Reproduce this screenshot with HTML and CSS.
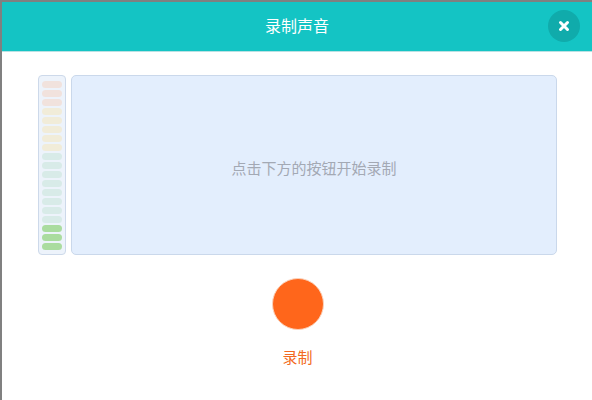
FILE: index.html
```html
<!DOCTYPE html>
<html lang="zh-CN">
<head>
<meta charset="UTF-8">
<title>录制声音</title>
<link rel="stylesheet" href="styles.css">
</head>
<body>
<div class="dialog">
    <div class="dialog-header">
        <span class="dialog-title">录制声音</span>
        <button class="close-btn" aria-label="关闭">
            <svg width="12" height="12" viewBox="0 0 12 12">
                <path d="M2.5 2.5 L9.5 9.5 M9.5 2.5 L2.5 9.5" stroke="#fff" stroke-width="3" stroke-linecap="round"/>
            </svg>
        </button>
    </div>
    <div class="dialog-body">
        <div class="recorder">
            <div class="meter">
                <span class="bar red"></span>
                <span class="bar red"></span>
                <span class="bar red"></span>
                <span class="bar yellow"></span>
                <span class="bar yellow"></span>
                <span class="bar yellow"></span>
                <span class="bar yellow"></span>
                <span class="bar yellow"></span>
                <span class="bar cyan"></span>
                <span class="bar cyan"></span>
                <span class="bar cyan"></span>
                <span class="bar cyan"></span>
                <span class="bar cyan"></span>
                <span class="bar cyan"></span>
                <span class="bar cyan"></span>
                <span class="bar cyan"></span>
                <span class="bar green on"></span>
                <span class="bar green on"></span>
                <span class="bar green on"></span>
            </div>
            <div class="wave-panel">点击下方的按钮开始录制</div>
        </div>
        <div class="controls">
            <button class="record-btn" aria-label="录制"></button>
            <div class="record-label">录制</div>
        </div>
    </div>
</div>
</body>
</html>
```

FILE: styles.css
```css
html, body {
  margin: 0;
  height: 100%;
}

body {
  background-color: #808080;
  font-family: "Noto Sans CJK SC", "Noto Sans", sans-serif;
  padding: 2px 0 0 2px;
  box-sizing: border-box;
}

.dialog {
  background-color: #fff;
  height: 100%;
}

.dialog-header {
  height: 49px;
  background-color: #14c4c4;
  border-bottom: 1px solid #b9e1e3;
  display: flex;
  align-items: center;
  justify-content: center;
  position: relative;
}

.dialog-title {
  color: #fff;
  font-size: 16px;
  margin-bottom: 3px;
}

.close-btn {
  position: absolute;
  right: 12px;
  top: 8px;
  width: 32px;
  height: 32px;
  border-radius: 50%;
  border: none;
  background-color: #10abab;
  display: flex;
  align-items: center;
  justify-content: center;
  padding: 0;
  cursor: pointer;
}

.dialog-body {
  padding: 23px 35px 0 36px;
}

.recorder {
  display: flex;
  gap: 5px;
  height: 180px;
}

.meter {
  width: 20px;
  border: 1px solid #cdd9ea;
  border-radius: 4px;
  background-color: #edf3fb;
  padding: 5px 3px 0 3px;
  display: flex;
  flex-direction: column;
  gap: 2px;
}

.bar {
  display: block;
  height: 7px;
  border-radius: 4px;
}

.bar.red { background-color: #f1e2dd; }
.bar.yellow { background-color: #f1ecd9; }
.bar.cyan { background-color: #d8ebe8; }
.bar.green { background-color: #aadc9f; }

.wave-panel {
  flex: 1;
  border: 1px solid #cad8eb;
  border-radius: 5px;
  background-color: #e3eefd;
  display: flex;
  align-items: center;
  justify-content: center;
  color: #a3a9b4;
  font-size: 15px;
  padding-top: 4px;
}

.controls {
  display: flex;
  flex-direction: column;
  align-items: center;
  padding-top: 23px;
}

.record-btn {
  width: 52px;
  height: 52px;
  border-radius: 50%;
  border: 1px solid #fbd2bb;
  background-color: #ff661b;
  padding: 0;
  cursor: pointer;
}

.record-label {
  color: #f26a22;
  font-size: 15px;
  margin-top: 16px;
}
```
